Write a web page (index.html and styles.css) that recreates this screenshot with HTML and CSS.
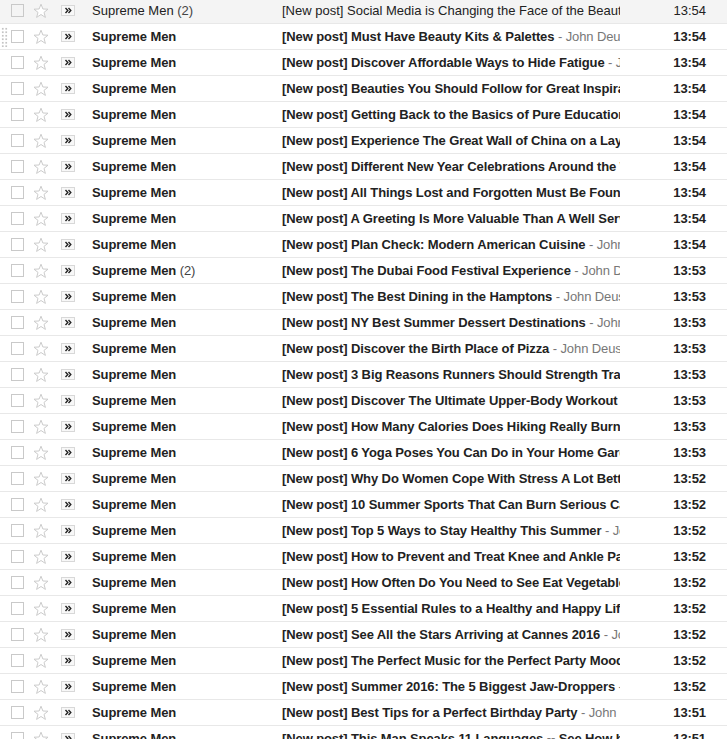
FILE: index.html
```html
<!DOCTYPE html>
<html lang="en">
<head>
    <meta charset="UTF-8">
    <meta name="viewport" content="width=device-width, initial-scale=1.0">
    <title>Inbox - Supreme Men</title>
    <link rel="stylesheet" href="styles.css">
</head>
<body>
    <svg width="0" height="0" class="defs">
        <defs>
            <symbol id="star" viewBox="0 0 16 16">
                <path d="M8 1.2 L9.9 6 L15 6.2 L11 9.4 L12.4 14.4 L8 11.5 L3.6 14.4 L5 9.4 L1 6.2 L6.1 6 Z" fill="#fff" stroke="#cccccc" stroke-width="1" stroke-linejoin="round"/>
            </symbol>
            <symbol id="marker" viewBox="0 0 14 11">
                <rect x="0.5" y="0.5" width="13" height="10" fill="#f8f8f8" stroke="#d8d8d8"/>
                <path d="M4.5 3 L6.8 5.5 L4.5 8 M7.5 3 L9.8 5.5 L7.5 8" fill="none" stroke="#222" stroke-width="1.4"/>
            </symbol>
        </defs>
    </svg>

    <div class="mail-list" id="mail-list"></div>

    <script>
        // Liste des messages (expéditeur, compteur, sujet, auteur, heure, lu ?)
        const mails = [
            ['Supreme Men', '(2)', '[New post] Social Media is Changing the Face of the Beauty Industry', 'John Deuser', '13:54', true],
            ['Supreme Men', '', '[New post] Must Have Beauty Kits & Palettes', 'John Deuser', '13:54'],
            ['Supreme Men', '', '[New post] Discover Affordable Ways to Hide Fatigue', 'John Deuser', '13:54'],
            ['Supreme Men', '', '[New post] Beauties You Should Follow for Great Inspiration', 'John Deuser', '13:54'],
            ['Supreme Men', '', '[New post] Getting Back to the Basics of Pure Education', 'John Deuser', '13:54'],
            ['Supreme Men', '', '[New post] Experience The Great Wall of China on a Layover', 'John Deuser', '13:54'],
            ['Supreme Men', '', '[New post] Different New Year Celebrations Around the World', 'John Deuser', '13:54'],
            ['Supreme Men', '', '[New post] All Things Lost and Forgotten Must Be Found', 'John Deuser', '13:54'],
            ['Supreme Men', '', '[New post] A Greeting Is More Valuable Than A Well Served Meal', 'John Deuser', '13:54'],
            ['Supreme Men', '', '[New post] Plan Check: Modern American Cuisine', 'John Deuser', '13:54'],
            ['Supreme Men', '(2)', '[New post] The Dubai Food Festival Experience', 'John Deuser', '13:53'],
            ['Supreme Men', '', '[New post] The Best Dining in the Hamptons', 'John Deuser', '13:53'],
            ['Supreme Men', '', '[New post] NY Best Summer Dessert Destinations', 'John Deuser', '13:53'],
            ['Supreme Men', '', '[New post] Discover the Birth Place of Pizza', 'John Deuser', '13:53'],
            ['Supreme Men', '', '[New post] 3 Big Reasons Runners Should Strength Train', 'John Deuser', '13:53'],
            ['Supreme Men', '', '[New post] Discover The Ultimate Upper-Body Workout', 'John Deuser', '13:53'],
            ['Supreme Men', '', '[New post] How Many Calories Does Hiking Really Burn', 'John Deuser', '13:53'],
            ['Supreme Men', '', '[New post] 6 Yoga Poses You Can Do in Your Home Garden', 'John Deuser', '13:53'],
            ['Supreme Men', '', '[New post] Why Do Women Cope With Stress A Lot Better', 'John Deuser', '13:52'],
            ['Supreme Men', '', '[New post] 10 Summer Sports That Can Burn Serious Calories', 'John Deuser', '13:52'],
            ['Supreme Men', '', '[New post] Top 5 Ways to Stay Healthy This Summer', 'John Deuser', '13:52'],
            ['Supreme Men', '', '[New post] How to Prevent and Treat Knee and Ankle Pain', 'John Deuser', '13:52'],
            ['Supreme Men', '', '[New post] How Often Do You Need to See Eat Vegetables', 'John Deuser', '13:52'],
            ['Supreme Men', '', '[New post] 5 Essential Rules to a Healthy and Happy Life', 'John Deuser', '13:52'],
            ['Supreme Men', '', '[New post] See All the Stars Arriving at Cannes 2016', 'John Deuser', '13:52'],
            ['Supreme Men', '', '[New post] The Perfect Music for the Perfect Party Mood', 'John Deuser', '13:52'],
            ['Supreme Men', '', '[New post] Summer 2016: The 5 Biggest Jaw-Droppers', 'John Deuser', '13:52'],
            ['Supreme Men', '', '[New post] Best Tips for a Perfect Birthday Party', 'John Deuser', '13:51'],
            ['Supreme Men', '', '[New post] This Man Speaks 11 Languages -- See How he Did It', 'John Deuser', '13:51']
        ];

        const list = document.getElementById('mail-list');

        mails.forEach(function(m, i) {
            const row = document.createElement('div');
            row.className = 'mail-row' + (m[5] ? ' read' : '');
            row.innerHTML =
                (i === 1 ? '<span class="drag-handle"></span>' : '') +
                '<div class="cell-check"><span class="checkbox"></span></div>' +
                '<div class="cell-star"><svg width="16" height="16"><use href="#star"/></svg></div>' +
                '<div class="cell-marker"><svg width="14" height="11"><use href="#marker"/></svg></div>' +
                '<div class="cell-sender">' + m[0] + (m[1] ? ' <span class="count">' + m[1] + '</span>' : '') + '</div>' +
                '<div class="cell-subject"><span class="subject">' + m[2].replace('&', '&amp;') + '</span>' +
                '<span class="snippet"> - ' + m[3] + '</span></div>' +
                '<div class="cell-date">' + m[4] + '</div>';
            list.appendChild(row);
        });
    </script>
</body>
</html>
```

FILE: styles.css
```css
body {
    margin: 0;
    font-family: "Liberation Sans", Arial, sans-serif;
    font-size: 13px;
    color: #222;
    background: #fff;
    overflow: hidden;
}
.defs {
    position: absolute;
}
.mail-list {
    margin-top: -2px;
}
.mail-row {
    position: relative;
    display: flex;
    align-items: center;
    height: 25px;
    border-bottom: 1px solid #e8e8e8;
    background: #fff;
    font-weight: bold;
    letter-spacing: -0.1px;
    white-space: nowrap;
}
.mail-row.read {
    background: #f4f4f4;
    font-weight: normal;
    letter-spacing: 0;
}
.drag-handle {
    position: absolute;
    left: 1px;
    top: 3px;
    width: 7px;
    height: 20px;
    background-image: radial-gradient(circle, #c4c4c4 0.9px, transparent 1px);
    background-size: 3.5px 3.5px;
}
.cell-check {
    width: 29px;
    padding-left: 11px;
    box-sizing: border-box;
    display: flex;
}
.checkbox {
    width: 11px;
    height: 11px;
    border: 1px solid #c9c9c9;
    background: #fff;
}
.read .checkbox {
    background: transparent;
}
.cell-star {
    width: 32px;
    padding-left: 4px;
    box-sizing: border-box;
    display: flex;
}
.cell-marker {
    width: 31px;
    box-sizing: border-box;
    display: flex;
}
.cell-sender {
    width: 190px;
    overflow: hidden;
}
.count {
    font-weight: normal;
    color: #444;
}
.cell-subject {
    width: 338px;
    overflow: hidden;
}
.snippet {
    font-weight: normal;
    color: #777;
}
.cell-date {
    flex: 1;
    text-align: right;
    padding-right: 21px;
}
```
